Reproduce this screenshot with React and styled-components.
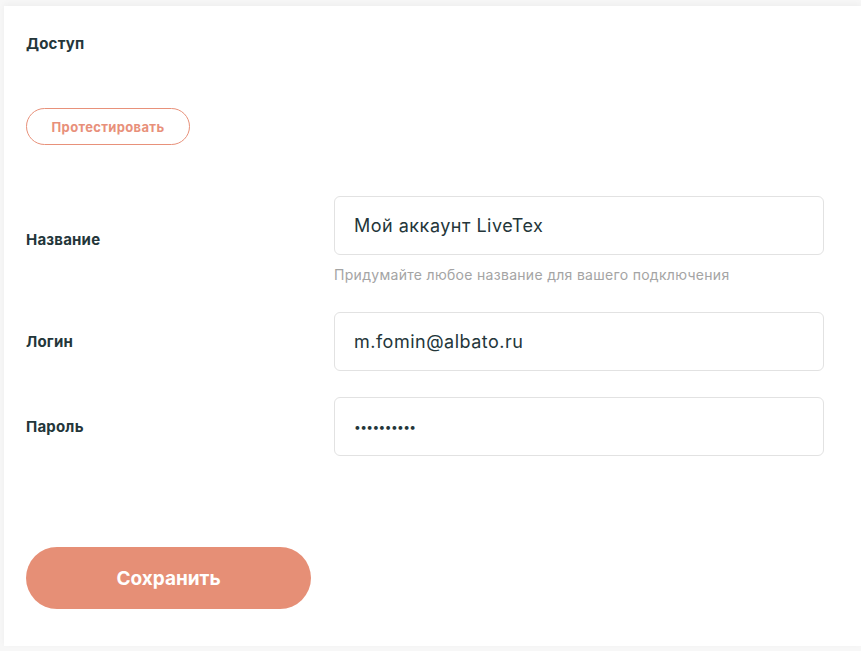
import React from "react";
import styled, { createGlobalStyle } from "styled-components";

const GlobalStyle = createGlobalStyle`
  html, body {
    margin: 0;
    padding: 0;
    background: #f7f7f7;
    font-family: Inter, "Noto Sans", "Liberation Sans", sans-serif;
  }
`;

const Page = styled.div`
  width: 861px;
  height: 651px;
  padding: 6px 0 0 4px;
  box-sizing: border-box;
  overflow: hidden;
`;

const Card = styled.div`
  background: #fff;
  padding: 28px 22px 37px;
  box-shadow: 0 -2px 6px rgba(0, 0, 0, 0.04);
  display: flex;
  flex-direction: column;
  align-items: flex-start;
`;

const Title = styled.h3`
  margin: 0;
  font-size: 15px;
  line-height: 20px;
  font-weight: 700;
  letter-spacing: 0.2px;
  color: #24363a;
`;

const TestButton = styled.button`
  margin-top: 54px;
  width: 164px;
  height: 37px;
  border: 1px solid #e8917a;
  border-radius: 19px;
  background: #fff;
  color: #e8907a;
  font-family: inherit;
  font-size: 13px;
  font-weight: 700;
  letter-spacing: 0.35px;
  cursor: pointer;
`;

const Form = styled.div`
  margin-top: 51px;
  display: flex;
  flex-direction: column;
  align-self: stretch;
`;

const Row = styled.div`
  display: flex;
  align-items: center;
  margin-top: ${(p) => p.$gap || 0}px;
`;

const Label = styled.label`
  width: 308px;
  flex-shrink: 0;
  font-size: 15px;
  font-weight: 700;
  letter-spacing: 0.2px;
  color: #24363a;
`;

const Field = styled.div`
  display: flex;
  flex-direction: column;
  width: 490px;
`;

const Input = styled.input`
  height: 59px;
  box-sizing: border-box;
  border: 1px solid #e2e2e2;
  border-radius: 6px;
  padding: 0 19px;
  font-family: inherit;
  font-size: ${(p) => (p.type === "password" ? "12px" : "18px")};
  letter-spacing: ${(p) => (p.type === "password" ? "-0.6px" : "0.5px")};
  color: #24363a;
  outline: none;
`;

const Hint = styled.span`
  margin-top: 12px;
  font-size: 14px;
  line-height: 16px;
  letter-spacing: 0.3px;
  color: #a4a4a4;
`;

const SaveButton = styled.button`
  margin-top: 91px;
  width: 285px;
  height: 62px;
  border: none;
  border-radius: 31px;
  background: #e68f76;
  color: #fff;
  font-family: inherit;
  font-size: 19px;
  font-weight: 700;
  cursor: pointer;
`;

export default function App() {
  return (
    <>
      <GlobalStyle />
      <Page>
        <Card>
          <Title>Доступ</Title>
          <TestButton type="button">Протестировать</TestButton>
          <Form>
            <Row>
              <Label>Название</Label>
              <Field>
                <Input type="text" defaultValue="Мой аккаунт LiveTex" />
                <Hint>Придумайте любое название для вашего подключения</Hint>
              </Field>
            </Row>
            <Row $gap={29}>
              <Label>Логин</Label>
              <Field>
                <Input type="text" defaultValue="m.fomin@albato.ru" />
              </Field>
            </Row>
            <Row $gap={26}>
              <Label>Пароль</Label>
              <Field>
                <Input type="password" defaultValue="1234567890" />
              </Field>
            </Row>
          </Form>
          <SaveButton type="button">Сохранить</SaveButton>
        </Card>
      </Page>
    </>
  );
}
